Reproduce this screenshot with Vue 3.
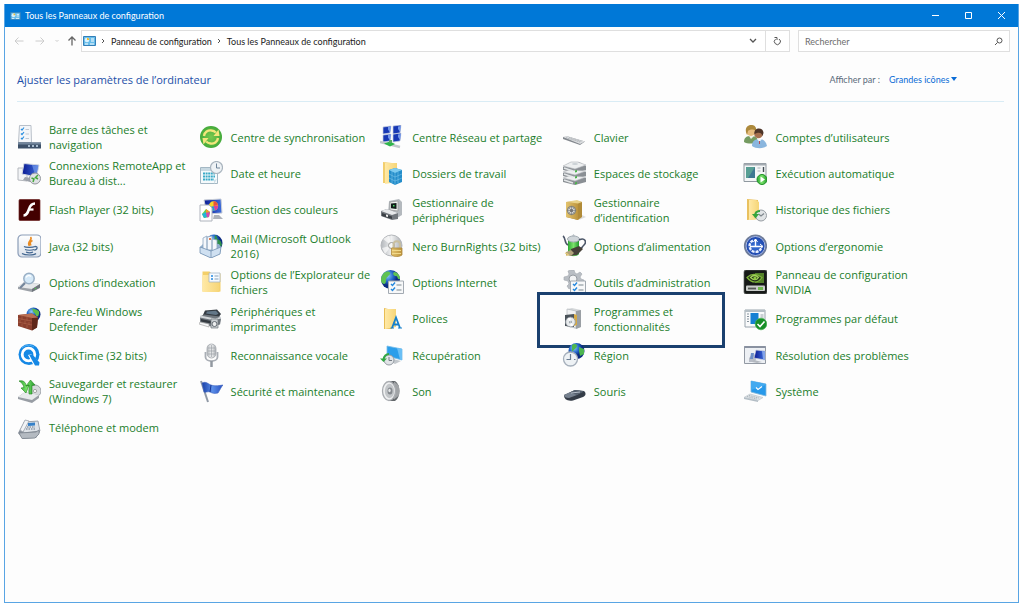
<script setup>
import { ref } from 'vue'

const query = ref('')
const view = ref('Grandes icônes')
const views = ['Catégorie', 'Grandes icônes', 'Petites icônes']

const glyphs = {
  taskbar:
    '<path d="M2.500 .5h11.500l.5 17h-13z" fill="#f4f6f9" stroke="#b9c0c9"/><path d="M4 4l1 1 2-2.500M4 8.500l1 1 2-2.500M4 13l1 1 2-2.500" fill="none" stroke="#2b8fe0" stroke-width="1.200"/><path d="M8.500 4.500h3.500M8.500 9h3.500M8.500 13.500h3.500" stroke="#c0c8d2"/><path d="M1 17.500h23v6H1z" fill="#3d5068"/><path d="M1 17.500h23v2H1z" fill="#71849b"/><path d="M11 20h2v2h-2zM15 20h2v2h-2zM19 20h2v2h-2z" fill="#a9bccf"/>',
  remote:
    '<path d="M1 7h9v13l-9-1z" fill="#f3f4f6" stroke="#b4b7bd"/><path d="M7 2.500L22 4l-2.500 12L5 13z" fill="url(#navy)" stroke="#d3d8e2" stroke-width="1"/><path d="M15 4l6.500.8-2.200 10-1-.3z" fill="#7fa4ee" opacity=".6"/><path d="M8 16l6 1-1 4-7-2z" fill="#9da2ab"/><circle cx="18" cy="17.500" r="5.500" fill="#dfe1e4" stroke="#94989e"/><path d="M14.500 17l2.500 1-1 3M21 14l-2.500 2.500 2.500 1.500" fill="none" stroke="#48a83e" stroke-width="1.500"/>',
  flash:
    '<rect x="2" y="1.500" width="21" height="21" rx="1" fill="#430000" stroke="#6e2422" stroke-width=".7"/><path d="M18 5.500c-4 0-5 2.500-6 5.500-1.300 4-2.300 6.500-5.500 6.500" fill="none" stroke="#fff" stroke-width="2.500"/><path d="M11.500 11.500h5" stroke="#fff" stroke-width="2.200"/>',
  java:
    '<rect x="1" y="1" width="23" height="22" rx="4" fill="url(#paper)" stroke="#8b9db8" stroke-width="1.200"/><path d="M13.500 3c3 3-4.500 4-1 9M15.500 6.500c-3 1.500-2.500 3-1.500 5" fill="none" stroke="#e98b22" stroke-width="1.600"/><path d="M7 12.500c2 1.500 9 1 11 0M8 15.500c2 1 7 1 9 0M9 18c2 1 5 1 7 0M5 19.500c3 2 12 2 14 0M17.500 12.500c4-.5 3 3.500-.5 3.500" fill="none" stroke="#41658f" stroke-width="1.200"/>',
  indexing:
    '<path d="M1 17l6-5 16 2v4l-8 4-14-3z" fill="#9ca1a7"/><path d="M1 17l6-5 16 2-8 5z" fill="#e6e8ea"/><path d="M15 19l8-5v3.500L15 22z" fill="#70767d"/><circle cx="12" cy="8.500" r="5.200" fill="#d5e9f8" stroke="#99afc5" stroke-width="1.500"/><path d="M9 7.500c1-2 3.500-2.500 5-1" fill="none" stroke="#fff" stroke-width="1.300"/><path d="M8 13l-5 5" stroke="#73849a" stroke-width="2.200"/><circle cx="18.500" cy="18.500" r=".8" fill="#53c553"/>',
  firewall:
    '<circle cx="16.500" cy="7.500" r="7" fill="url(#globe)"/><path d="M14 1.500c3 1 1 3 3 4s1 4 4 4c1-2 2-5 0-6s-4-2-7-2z" fill="#60be49"/><path d="M1 8l14-1.500 6 4-1 10-5 3L1 19z" fill="#8a3f2e"/><path d="M15 11l6-.5-1 10-5 3z" fill="#602719"/><path d="M1 8l14-1.500 6 4-6 .5z" fill="#b96f54"/><path d="M1 11.500l14 2.500M1 15l14 3M5 9v4M10 10v4M3 13v3M8 13.500v3.500M12 15v3M5 17v3M10 18v3" stroke="#b0644c" stroke-width=".6"/>',
  quicktime:
    '<circle cx="12" cy="11.500" r="10.500" fill="#1588e5"/><circle cx="11.500" cy="11.500" r="6.300" fill="none" stroke="#fff" stroke-width="2.800"/><path d="M11 12l3-1 8 8v4h-5z" fill="#fff"/><path d="M12 11.500h3.500l7 8-.5 3h-4z" fill="#1588e5"/><path d="M5 5c4-4 9-3 12-1" fill="none" stroke="#55b3f4"/>',
  backup:
    '<circle cx="18" cy="12" r="6" fill="#d6d9dc" stroke="#9ba0a6"/><circle cx="18" cy="12" r="1.600" fill="#fff" stroke="#888" stroke-width=".7"/><path d="M1 18l7-5 14 3v3l-7 5-14-4z" fill="#989da4"/><path d="M1 18l7-5 14 3-7 5z" fill="#e8eaec"/><path d="M2 2c4-1 7 1 7 5l3-1-3 8-5-5 3-.5C6 5 5 4 2 2zM12 15V6l-3 1 4.500-6L18 6l-3 .5V15z" fill="url(#green)" stroke="#23831f" stroke-width=".6"/>',
  phone:
    '<path d="M1 17L7 6l14-1 2 11-4 6-13 1z" fill="#89919b"/><path d="M7 6l14-1 2 10-17 2z" fill="#dfe3e8" stroke="#858d97" stroke-width=".7"/><path d="M3 14L8 4l4 1-6 11z" fill="#f2f4f6" stroke="#9ba1a9" stroke-width=".8"/><path d="M11 7l7-.5v3l-7 .5z" fill="#3681c8"/><path d="M10 11h8M9 13h10" stroke="#667789" stroke-dasharray="1.500 1"/><path d="M2 17l17-1 3-2v4l-4 4-13 .5z" fill="#b4bac1" stroke="#777f89" stroke-width=".7"/>',
  sync:
    '<circle cx="12" cy="12" r="11" fill="url(#sync)"/><path d="M5 11c.5-4 4-6 7.500-5.500 2 .2 3.300 1 4.300 2" fill="none" stroke="#f3e67c" stroke-width="2.400"/><path d="M14.500 11H20.500l-1-6.500z" fill="#f3e67c"/><path d="M19 13c-.5 4-4 6-7.500 5.500-2-.2-3.300-1-4.300-2" fill="none" stroke="#f3e67c" stroke-width="2.400"/><path d="M9.500 13H3.500l1 6.500z" fill="#f3e67c"/>',
  date:
    '<path d="M1.500 6.500h17v16h-17z" fill="#f5fafc" stroke="#a4b8c4"/><path d="M2 7h16v3H2z" fill="#c8d9e2"/><path d="M4 12.500h12M4 15.500h12M4 18.500h11" stroke="#3aaac7" stroke-width="2" stroke-dasharray="2 .6"/><path d="M15 23v-4l3-1z" fill="#cfe0e8"/><circle cx="17.500" cy="6.500" r="6" fill="#eef2f5" stroke="#a9b4be" stroke-width="1.200"/><path d="M17.500 2.500v4.500H21" fill="none" stroke="#6f8499"/>',
  color:
    '<path d="M5 2l17-1 1 14-15 1z" fill="url(#navy)" stroke="#c9ced6"/><circle cx="14.500" cy="8" r="4.700" fill="#f4d72d"/><path d="M14.500 8V3.300a4.700 4.700 0 014.500 4z" fill="#ea523d"/><path d="M14.500 8l4.500-.5a4.700 4.700 0 01-3 5z" fill="#db3ea0"/><path d="M14.500 8l1.500 4.500a4.700 4.700 0 01-6-3z" fill="#2498db"/><path d="M15 17h5l4 4H14z" fill="#aeb3ba"/><path d="M1 7h9l3 3v13H1z" fill="#fff" stroke="#aeb3bc"/><path d="M7 11l4 3-1 5-5 1-2-4z" fill="#67d34b"/><path d="M3 16l4-2 1 5-3 1z" fill="#22b6d8"/><path d="M7 11l4 3-4 1z" fill="#f49a2c"/><path d="M7 15l4-1-1 5-2 .5z" fill="#d849b1"/>',
  mail:
    '<circle cx="15" cy="9" r="8.500" fill="url(#globe)"/><path d="M16 1c3 1 1 4 4 5s2 4 3 4c-1 4-4 7-6 7l-2-8z" fill="#2f8f4c"/><path d="M1 13l4-4 15 1 2 3-1 7-9 4-11-5z" fill="#92b0ce"/><path d="M4 4l4-2v14l-4-1zM8 3l5-1v14H8zM13 5l5 1v11h-5z" fill="#f4f7fb" stroke="#8ea6c0" stroke-width=".8"/><path d="M10 4h2v2h-2z" fill="#e17b50"/><path d="M1 13l11 4 10-4-1 7-9 4-11-5z" fill="#cfe0f1" stroke="#7392b2" stroke-width=".8"/><path d="M12 17v7" stroke="#7392b2" stroke-width=".8"/>',
  explorer:
    '<path d="M3.500 1.500h7l2 2h9v18h-18z" fill="#f3cf68"/><path d="M3.500 5h17v17h-17z" fill="url(#folder)"/><path d="M10 3h11v9H10z" fill="#f5faff" stroke="#a7b6c5" stroke-width=".8"/><path d="M12 6h2M12 9h2" stroke="#2689df" stroke-width="1.600"/><path d="M15.500 6h4M15.500 9h4" stroke="#8aa1b6"/>',
  printer:
    '<path d="M6 3.500l12-1 4 4.500-3 4-15-3z" fill="#343b42"/><path d="M8 4.500l9-.7 2.500 3L17 8 7 6.500z" fill="#637788"/><path d="M1 9.500l4-2 16 2 1 3-1 5-9 2-11-4z" fill="#70777e"/><path d="M1 9.500l15 3 6-2" fill="none" stroke="#d2d6d9" stroke-width="1.800"/><path d="M2 12l10 2v2.500L2 14.500z" fill="#343a40"/><path d="M1 15l9 2v3l-10-3z" fill="#f7f8f9" stroke="#999" stroke-width=".6"/><path d="M12 12h7v9h-7z" fill="#c9ced2" stroke="#6f767d" stroke-width=".7"/><circle cx="15.500" cy="17" r="2.500" fill="#eceeef" stroke="#646b72"/>',
  mic:
    '<rect x="8" y="1" width="9" height="14" rx="4.500" fill="url(#metal)" stroke="#a2a7ad" stroke-width=".8"/><path d="M9 5h7M9 8h7M9 11h7M12.500 2v12" stroke="#9ca2a8" stroke-width=".7"/><path d="M6.500 9v5c0 5.500 12 5.500 12 0V9" fill="none" stroke="#a9aeb5" stroke-width="1.800"/><path d="M12.500 18v6" stroke="#9298a0" stroke-width="2.500"/>',
  flag:
    '<path d="M2 2l7 21" stroke="#8f98a5" stroke-width="2"/><path d="M3 4c4-2 6 1 9 2s6 1 12 0c-2 2-3 5-5 8-4 1-6 0-8-1s-5 1-6 0z" fill="url(#flagblue)" stroke="#3c62bd" stroke-width=".6"/><path d="M12 6l-1 7" stroke="#183796"/>',
  network:
    '<path d="M3 2l8-1-1 7-7 1zM13 1l8-1-1 8-7 1zM3 10l8-1-1 7-7 1zM13 9l8-1-1 8-7 1z" fill="#1838b4" stroke="#c6cfe0" stroke-width=".7"/><path d="M8 2l3-.5-1 6-2-3zM18 1.500l3-.5-1 6-2-3zM8 10l3-.5-1 6-2-3zM18 9.500l3-.5-1 6-2-3z" fill="#7398ea"/><path d="M0 17l20 5" stroke="#c3c8cc" stroke-width="2.500"/><path d="M4 18.500l6-2 5 2.500-5 2.500z" fill="#2eb64a"/><path d="M9 15h3v3H9z" fill="#5aa56a"/>',
  work:
    '<path d="M3 1l9 1v20H3z" fill="#f2ce6d"/><path d="M5 2h12v19l-12 2z" fill="url(#folder)"/><path d="M9 9l6-2 7 2v12l-7 3-6-3z" fill="#248dca"/><path d="M9 9l6-2 7 2-7 3z" fill="#7dcbf0"/><path d="M15 12v12M9 13l6 3 7-3M9 17l6 3 7-3M12 10v12M18 11v11" stroke="#79c4ea" stroke-width=".6" fill="none"/>',
  device:
    '<path d="M9 3l10-2 3 3v13l-5 3-9-4z" fill="#b4b9be"/><path d="M10 4l8-1v10l-8-1z" fill="#efefef" stroke="#999" stroke-width=".8"/><path d="M11 5.500l5.500-.6V11l-5.500-.7z" fill="#111d19"/><path d="M13 7h1.500v1.500H13z" fill="#47df68"/><path d="M1 13l6-2 11 4v6l-6 1-11-4z" fill="#72777d"/><path d="M1 13l6-2 11 4-6 2z" fill="#e7e9eb"/><path d="M2 15l10 3.500V21L2 18z" fill="#3b4046"/><path d="M6 16.500l2 .6v2L6 18.500z" fill="#eee"/>',
  burn:
    '<circle cx="11.500" cy="11.500" r="10.500" fill="url(#metal)" stroke="#b3b6ba"/><path d="M11.500 11.500L3 5l6-3.500zM11.500 11.500L5 20l-3-6z" fill="#fff" opacity=".65"/><circle cx="11.500" cy="11.500" r="3" fill="#f7f8f8" stroke="#999"/><path d="M13.500 14v-3c0-5 6.500-5 6.500 0v3" fill="none" stroke="#c9bf9f" stroke-width="2"/><path d="M11.500 14h10.500v7c-3 2-7.500 2-10.500 0z" fill="url(#gold)" stroke="#b08b3f" stroke-width=".8"/><path d="M12 16.500h9M12 19.500h9" stroke="#f1d98a"/>',
  internet:
    '<circle cx="10.500" cy="9.500" r="9.500" fill="url(#globe)"/><path d="M4 3c4-3 7-1 6 1S6 7 6 10s-1 4-2 4C0 13 0 7 4 3zM14 2c4 0 6 4 6 7-3 1-2-3-4-3s-4-2-2-4z" fill="#5fc253"/><path d="M8.500 11h15v12.500h-15z" fill="#f7f8f9" stroke="#a3aab2"/><path d="M11 14l1.500 1.500L15 12.500M11 19l1.500 1.500 2.500-3" fill="none" stroke="#2588de" stroke-width="1.400"/><path d="M16.500 15h5M16.500 20h5" stroke="#7d8790" stroke-width="1.200"/>',
  fonts:
    '<path d="M4 1l8 2v19H4z" fill="#e8bd55"/><path d="M5 2h11v18l-11 2z" fill="url(#folder)"/><path d="M12 21l4-10.500L20 21M13.500 17.500h5" fill="none" stroke="#1680cb" stroke-width="1.800"/><path d="M10.500 21h3.500M18 21h4" stroke="#1680cb"/>',
  recovery:
    '<path d="M7 3l15 3v11L7 13z" fill="#2c9eea" stroke="#77bce9" stroke-width=".8"/><path d="M17 5l5 1v11l-2-.5z" fill="#6abff5"/><path d="M13 16l8 2-6 3-6-3z" fill="#c3c8cd"/><circle cx="9" cy="17" r="5" fill="#e1e4e7" stroke="#939aa1"/><path d="M9 14v3.500h3" fill="none" stroke="#737b83"/><path d="M3.500 17c0-4 3-6 5.500-6" fill="none" stroke="#32a743" stroke-width="2"/><path d="M0 15.500h7L3.500 19z" fill="#32a743"/>',
  sound:
    '<path d="M9 2h6c6 4 6 16 0 20H9z" fill="#63676b"/><path d="M14 2.500l5 4v10l-5 4z" fill="#a0a3a6"/><ellipse cx="9" cy="12" rx="6.500" ry="9.500" fill="#eff0f1" stroke="#a9acb0" stroke-width="1.300"/><ellipse cx="9.500" cy="12" rx="4.700" ry="7.200" fill="#c3c6c9"/><ellipse cx="10" cy="12" rx="2.500" ry="3.500" fill="#85898e"/><ellipse cx="9.500" cy="11.500" rx="1.200" ry="1.800" fill="#e6e8e9"/>',
  keyboard:
    '<path d="M1 12l5-.5 17 5-5 3.500L1 14z" fill="#83888e"/><path d="M1 12l5-.5 17 5-5 2.500z" fill="#dcdee0"/><path d="M4 12.700l14 4.300M7 12.500l13 4" stroke="#a4aaaf" stroke-width=".8" stroke-dasharray="1.500 .7"/>',
  storage:
    '<path d="M1 18l6-3 17 2v4l-11 3L1 21zM1 12l6-3 17 2v4l-11 3.500L1 15zM1 6l6-4 10-1 7 4v4L13 12 1 9z" fill="#8a8f94"/><path d="M1 17l6-2 17 1-11 4zM1 11l6-2 17 1-11 4zM1 5l8-4h7l8 3-11 4z" fill="#edeff0" stroke="#b0b4b8" stroke-width=".6"/><path d="M2 7l9 3M2 13l9 3M2 19l9 3" stroke="#e3e6e8" stroke-width="1.600"/><path d="M13 9.500l2-.6v2l-2 .6zM13 15.500l2-.6v2l-2 .6zM13 21.500l2-.6v2l-2 .6z" fill="#4ab34a"/><ellipse cx="13" cy="3" rx="3" ry="1" fill="#cbd0d4"/>',
  vault:
    '<path d="M20 17l4 2-7 3z" fill="#ddd"/><path d="M4 4l12-1 4 1v15l-4 3-12-3z" fill="#b18b38"/><path d="M4 4l12 1v17l-12-3z" fill="url(#gold)"/><path d="M4 4l11-2 5 2-4 1.500z" fill="#e9d28a"/><circle cx="9.500" cy="12.500" r="4.700" fill="#8c8a7c"/><circle cx="9.500" cy="12.500" r="3.300" fill="#d3d5d5"/><circle cx="9.500" cy="12.500" r="1.500" fill="#666"/><path d="M9.500 8v9M5 12.500h9M6.500 9.500l6 6M12.500 9.500l-6 6" stroke="#777" stroke-width=".6"/>',
  power:
    '<path d="M6 5h11v15c-2 3-9 3-11 0z" fill="url(#green)"/><ellipse cx="11.500" cy="5" rx="6" ry="3" fill="#d0d6da" stroke="#a4adb3"/><path d="M9 3l2.500-3L14 3z" fill="#b6bec4"/><path d="M6 11C2 9 4 4 1 2M17 6c6-3 8 2 5 5s-2 4-5 4" fill="none" stroke="#4c5668" stroke-width="1.600"/><path d="M9 15l8-3 4 3-6 6-7 1z" fill="#454038"/><path d="M4 18l5-2 3 3-3 3-5-1z" fill="#b2a37b"/><path d="M3 19l3 1M4 21.500l3-1" stroke="#e4c979" stroke-width="1.300"/>',
  admin:
    '<path d="M9 0h3l1 3 2 1 3-2 2 2-2 3 1 2 3 1v3h-4l-1 3-3 4-2-2-2-1-3 2-2-3 2-2-1-3-4-1V7l4-1 1-2-1-3 3-1z" fill="#b9bec4" stroke="#a2a8ae" stroke-width=".6"/><circle cx="11" cy="9" r="4" fill="#f2f3f4" stroke="#959ba1"/><path d="M8.500 11h15v12.500h-15z" fill="#f7f8f9" stroke="#a3aab2"/><path d="M11 14l1.500 1.500L15 12.500M11 19l1.500 1.500 2.500-3" fill="none" stroke="#2588de" stroke-width="1.400"/><path d="M16.500 15h5M16.500 20h5" stroke="#7d8790" stroke-width="1.200"/>',
  programs:
    '<path d="M5 2l5-1 9 2v17l-5 2-9-3z" fill="#d5d8da"/><path d="M5 2l9 2v17l-9-2z" fill="#f1f2f3" stroke="#b3b7bb" stroke-width=".7"/><path d="M14 4l5-1v17l-5 2z" fill="#9a9fa4"/><path d="M12 7l3 1v10l-3 1z" fill="#d6aa44"/><path d="M3 8l9-1v13l-9-1z" fill="#4a5259"/><circle cx="8.500" cy="15" r="4.800" fill="#e8ebed" stroke="#959ba1" stroke-width=".9"/><circle cx="8.500" cy="15" r="1.600" fill="#9da5ac"/><path d="M8.500 15l-3-3.500 3-1zM8.500 15l3 3.500-3 1z" fill="#fff"/>',
  region:
    '<circle cx="14.500" cy="8" r="8" fill="url(#globe)"/><path d="M10 2c5-3 6 1 4 3s-4 3-4 4zM17 4l5 2v5l-4 2-1-5z" fill="#4db64e"/><circle cx="8.500" cy="16" r="7" fill="#eef2f5" stroke="#a5afbb" stroke-width="1.300"/><path d="M8.500 11v5.500H4.500M12 16.500h1.500" fill="none" stroke="#6a7d92" stroke-width="1.200"/>',
  mouse:
    '<path d="M2 16l11-5 9 1c3 3 1 5-1 6l-10 3.500c-6 1-9-1.500-9-5.500z" fill="#343c47"/><path d="M2 16l11-5 8 1-6 4-8 3c-3 0-5-1-5-3z" fill="#76818f"/><path d="M13 11l9 1.500-7 3.500-7-2.500z" fill="#55606e"/><path d="M9 14l9-1" stroke="#b5bec9" stroke-width="1"/>',
  users:
    '<circle cx="8" cy="6" r="5" fill="#e6bd80"/><path d="M3 7C1-2 15-2 13 6c-2-2-6-2-8 0l-1 4z" fill="#ad8a3d"/><path d="M1 17c0-5 3-6 7-6s7 1 7 6c-3 2-11 2-14 0z" fill="#759b61"/><path d="M6 11l2 3 3-3z" fill="#edf2e8"/><circle cx="15.500" cy="9" r="4.300" fill="#a5704f"/><path d="M11.500 9c-1-7 9-7 9-1l-1 3c-1-4-4-4-8-2z" fill="#4d3427"/><path d="M9 21c0-5 3-7 7-7s7 2 8 7c-4 3-11 3-15 0z" fill="#8ab6de"/><path d="M14 14l2.500 3 2.500-3z" fill="#f4f6f8"/><path d="M16.500 16v3" stroke="#bd4d51"/>',
  autoplay:
    '<path d="M1 2.500h22v18H1z" fill="#f4f6f7" stroke="#8f989f"/><path d="M1 2.500h22v2H1z" fill="#a3abb1"/><path d="M3 6h9v11H3z" fill="#3e7892"/><path d="M3 6h9l-7 11H3z" fill="#589f94"/><path d="M14.500 7h3M14.500 10h3" stroke="#a9b1b8"/><path d="M20.500 6v5" stroke="#414b54" stroke-width="1.400"/><circle cx="19" cy="18.500" r="5" fill="url(#green)" stroke="#1c9023"/><path d="M17.500 15.500l4.500 3-4.500 3z" fill="#fff"/>',
  history:
    '<path d="M4 1l11 1v19l-11 1z" fill="#e9c15f"/><path d="M6 2h7l3 2v17l-10 1z" fill="url(#folder)"/><circle cx="18" cy="17.500" r="5.500" fill="#e1e4e6" stroke="#979da3"/><path d="M15.500 16l2.500 2 3-2.500" fill="none" stroke="#7f868d" stroke-width="1.200"/><path d="M12 18c0-3 2-5 5-5" fill="none" stroke="#36a43b" stroke-width="2"/><path d="M9 16h7l-3.500 4.500z" fill="#36a43b"/>',
  ease:
    '<circle cx="12.500" cy="12" r="10.800" fill="url(#easeblue)" stroke="#707d99" stroke-width="1.600"/><circle cx="12.500" cy="12" r="9.500" fill="none" stroke="#d4ddf1" stroke-width=".8"/><path d="M10 6.500a6 6 0 108 8" fill="none" stroke="#e8efff" stroke-width="2.400" stroke-dasharray="3 1"/><path d="M12.500 5v7.500H7M12.500 12.500h7" fill="none" stroke="#fff" stroke-width="1.400"/><path d="M10.500 8l2-3 2 3M17 10l3 2.500-3 2.500" fill="none" stroke="#fff"/>',
  nvidia:
    '<rect x="1" y="0" width="23" height="24" rx="2" fill="#171a18" stroke="#5d615e" stroke-width=".7"/><path d="M12 3h9v10h-9z" fill="#55822a"/><path d="M4 7.500c5-5 11-3 15 0-4 6-10 6-15 0z" fill="#23301a" stroke="#7fb53a" stroke-width="1.200"/><path d="M7.500 7.500c3-3 6-2 8 0-2 3-5 3-8 0z" fill="none" stroke="#a5d35c" stroke-width="1.200"/><circle cx="12" cy="8" r="1.600" fill="#8bc63d"/><rect x="3" y="15.500" width="19" height="5.500" rx="1" fill="#c9ccc9"/><path d="M5 18.500h8" stroke="#565a56" stroke-width="1.800"/><path d="M15 17h5v3h-5z" fill="#6fb84e"/>',
  defaults:
    '<path d="M2 3h20v17H2z" fill="#f9fafb" stroke="#99a4ad"/><path d="M2 3h20v2H2z" fill="#b5bfc6"/><path d="M4 7h2M4 9.500h2M4 12h2M4 14.500h2" stroke="#87939d"/><path d="M7.500 6h8v11h-8z" fill="#1680d3"/><path d="M17.500 8h3M17.500 10h3" stroke="#9ba5ad"/><circle cx="18" cy="17" r="5.800" fill="#188f28" stroke="#48b153" stroke-width=".7"/><path d="M14.500 17l2.500 2.500 4.500-5" fill="none" stroke="#fff" stroke-width="1.600"/>',
  trouble:
    '<path d="M1.500 3.500h21v17h-21z" fill="#edf0f4" stroke="#9299a3"/><path d="M1.500 3h21v2h-21z" fill="#8991a0"/><path d="M6 15l4-4 4 2-2 6H6z" fill="#b8bdc7"/><path d="M13 7l9 1v9l-11-2z" fill="url(#navy)" stroke="#cdd3df" stroke-width=".7"/><path d="M19 8l3 .5V17l-2-1z" fill="#82a3e9"/><path d="M8 10h3l-1 6H7z" fill="#6d8fc7"/><path d="M11 17l8 2-5 1-5-1z" fill="#b3b8bf"/>',
  system:
    '<path d="M8 2l15 3v12L8 13z" fill="#2799ea" stroke="#83b9dc" stroke-width=".8"/><path d="M8 2l15 3v1L8 11z" fill="#43aaf0"/><path d="M13 8.500l2 2 4-3" fill="none" stroke="#fff" stroke-width="1.200"/><path d="M7 15l13 3.500-5 3-14-3z" fill="#dde2e6" stroke="#bcc4ca" stroke-width=".7"/><path d="M1 18.500l14 3v1.500L1 20z" fill="#b3bdc5"/><path d="M6 16.500l10 2.500M4 17.500l10 2.500" stroke="#a9b2b8" stroke-dasharray="1 .8"/>'
}

const columns = [
  [
    ['taskbar', 'Barre des tâches et\nnavigation'],
    ['remote', 'Connexions RemoteApp et\nBureau à dist...'],
    ['flash', 'Flash Player (32 bits)'],
    ['java', 'Java (32 bits)'],
    ['indexing', 'Options d’indexation'],
    ['firewall', 'Pare-feu Windows\nDefender'],
    ['quicktime', 'QuickTime (32 bits)'],
    ['backup', 'Sauvegarder et restaurer\n(Windows 7)'],
    ['phone', 'Téléphone et modem']
  ],
  [
    ['sync', 'Centre de synchronisation'],
    ['date', 'Date et heure'],
    ['color', 'Gestion des couleurs'],
    ['mail', 'Mail (Microsoft Outlook\n2016)'],
    ['explorer', 'Options de l’Explorateur de\nfichiers'],
    ['printer', 'Périphériques et\nimprimantes'],
    ['mic', 'Reconnaissance vocale'],
    ['flag', 'Sécurité et maintenance']
  ],
  [
    ['network', 'Centre Réseau et partage'],
    ['work', 'Dossiers de travail'],
    ['device', 'Gestionnaire de\npériphériques'],
    ['burn', 'Nero BurnRights (32 bits)'],
    ['internet', 'Options Internet'],
    ['fonts', 'Polices'],
    ['recovery', 'Récupération'],
    ['sound', 'Son']
  ],
  [
    ['keyboard', 'Clavier'],
    ['storage', 'Espaces de stockage'],
    ['vault', 'Gestionnaire\nd’identification'],
    ['power', 'Options d’alimentation'],
    ['admin', 'Outils d’administration'],
    ['programs', 'Programmes et\nfonctionnalités'],
    ['region', 'Région'],
    ['mouse', 'Souris']
  ],
  [
    ['users', 'Comptes d’utilisateurs'],
    ['autoplay', 'Exécution automatique'],
    ['history', 'Historique des fichiers'],
    ['ease', 'Options d’ergonomie'],
    ['nvidia', 'Panneau de configuration\nNVIDIA'],
    ['defaults', 'Programmes par défaut'],
    ['trouble', 'Résolution des problèmes'],
    ['system', 'Système']
  ]
]

const panel =
  '<path d="M.5.500h12v9H.5z" fill="#68bdea" stroke="#337fb8"/><circle cx="4" cy="4" r="2.300" fill="#d9f2ff"/><path d="M4 4V1.700A2.300 2.300 0 016.300 4z" fill="#f3bd32"/><path d="M8 3h3M8 5h3M2 8h3M7 8h4" stroke="#fff"/>'
</script>

<template>
  <div class="window">
    <svg class="defs" aria-hidden="true">
      <defs>
        <linearGradient id="navy"><stop offset="0" stop-color="#0a1a92" /><stop offset="1" stop-color="#3f6fdd" /></linearGradient>
        <linearGradient id="paper" x2="0" y2="1"><stop offset="0" stop-color="#fff" /><stop offset="1" stop-color="#dce3ec" /></linearGradient>
        <linearGradient id="folder"><stop offset="0" stop-color="#ffe9a6" /><stop offset="1" stop-color="#f6d577" /></linearGradient>
        <linearGradient id="green"><stop offset="0" stop-color="#2da934" /><stop offset=".5" stop-color="#7be36b" /><stop offset="1" stop-color="#22992d" /></linearGradient>
        <linearGradient id="gold"><stop offset="0" stop-color="#e4c46e" /><stop offset="1" stop-color="#bd943d" /></linearGradient>
        <linearGradient id="metal"><stop offset="0" stop-color="#b4b8bc" /><stop offset=".5" stop-color="#f0f1f2" /><stop offset="1" stop-color="#a9adb2" /></linearGradient>
        <linearGradient id="flagblue"><stop offset="0" stop-color="#183fa7" /><stop offset=".5" stop-color="#5b8ee8" /><stop offset="1" stop-color="#274fc0" /></linearGradient>
        <radialGradient id="globe" cx=".35" cy=".3"><stop offset="0" stop-color="#90cdf6" /><stop offset=".6" stop-color="#2468ca" /><stop offset="1" stop-color="#0b2b80" /></radialGradient>
        <radialGradient id="sync"><stop offset="0" stop-color="#79c94f" /><stop offset="1" stop-color="#43aa3a" /></radialGradient>
        <radialGradient id="easeblue"><stop offset="0" stop-color="#3974da" /><stop offset="1" stop-color="#1a3fa5" /></radialGradient>
      </defs>
    </svg>

    <header class="titlebar">
      <svg class="panel-icon small" viewBox="0 0 13 10" aria-hidden="true" v-html="panel"></svg>
      <span class="title">Tous les Panneaux de configuration</span>
      <button type="button" aria-label="Réduire">
        <svg width="9" height="9" viewBox="0 0 9 9"><path d="M1 4.500h7" /></svg>
      </button>
      <button type="button" aria-label="Agrandir">
        <svg width="9" height="9" viewBox="0 0 9 9"><path d="M1.500 1.500h6v6h-6z" /></svg>
      </button>
      <button type="button" aria-label="Fermer">
        <svg width="9" height="9" viewBox="0 0 9 9"><path d="M1 1l7 7M8 1l-7 7" /></svg>
      </button>
    </header>

    <nav class="toolbar" aria-label="Navigation">
      <div class="history">
        <button type="button" class="dim" aria-label="Précédent">
          <svg width="10" height="10" viewBox="0 0 10 10"><path d="M9.500 5H1M4.500 1.500L1 5l3.500 3.500" /></svg>
        </button>
        <button type="button" class="dim" aria-label="Suivant">
          <svg width="10" height="10" viewBox="0 0 10 10"><path d="M.5 5H9M5.500 1.500L9 5 5.500 8.500" /></svg>
        </button>
        <button type="button" class="dim narrow" aria-label="Emplacements récents">
          <svg width="4" height="4" viewBox="0 0 4 4"><path d="M.5 1L2 2.500 3.500 1" /></svg>
        </button>
        <button type="button" class="up" aria-label="Dossier parent">
          <svg width="10" height="10" viewBox="0 0 10 10"><path d="M5 9.500V1M1.500 4.500L5 1l3.500 3.500" /></svg>
        </button>
      </div>
      <div class="address">
        <svg class="panel-icon" viewBox="0 0 13 10" aria-hidden="true" v-html="panel"></svg>
        <svg class="chevron" viewBox="0 0 4 6" aria-hidden="true"><path d="M1 1l2 2-2 2" /></svg>
        <a href="#panneau">Panneau de configuration</a>
        <svg class="chevron" viewBox="0 0 4 6" aria-hidden="true"><path d="M1 1l2 2-2 2" /></svg>
        <a href="#tous">Tous les Panneaux de configuration</a>
        <span class="spacer"></span>
        <button type="button" class="drop" aria-label="Adresses précédentes">
          <svg width="8" height="6" viewBox="0 0 8 6"><path d="M1 1l3 3 3-3" /></svg>
        </button>
        <button type="button" class="refresh" aria-label="Actualiser">
          <svg width="9" height="10" viewBox="0 0 9 10"><path d="M6 3A3 3 0 112.500 3.200M1.500 1.500h2.500V4" /></svg>
        </button>
      </div>
      <div class="search">
        <input v-model="query" type="text" placeholder="Rechercher" aria-label="Rechercher" />
        <button type="button" aria-label="Lancer la recherche">
          <svg width="9" height="9" viewBox="0 0 9 9"><circle cx="5.500" cy="3.500" r="2.500" /><path d="M3.500 5.500L1 8" /></svg>
        </button>
      </div>
    </nav>

    <main>
      <div class="heading">
        <h1>Ajuster les paramètres de l’ordinateur</h1>
        <label for="view">Afficher par :</label>
        <div class="select">
          <select id="view" v-model="view">
            <option v-for="name in views" :key="name">{{ name }}</option>
          </select>
          <svg width="6" height="4" viewBox="0 0 6 4" aria-hidden="true"><path d="M0 0h6L3 4z" /></svg>
        </div>
      </div>

      <div class="items">
        <ul v-for="(column, c) in columns" :key="c">
          <li v-for="[id, name] in column" :key="id" :class="{ marked: id === 'programs' }">
            <a :href="'#' + id">
              <svg class="icon" viewBox="0 0 24 24" aria-hidden="true" v-html="glyphs[id]"></svg>
              <span>{{ name }}</span>
            </a>
          </li>
        </ul>
      </div>
    </main>
  </div>
</template>

<style>
body {
  margin: 0;
  background: #fff;
}
</style>

<style scoped>
.window {
  box-sizing: border-box;
  display: flex;
  flex-direction: column;
  min-height: calc(100vh - 10px);
  margin: 4px 5px 6px 4px;
  border: 1px solid #59a5e4;
  border-top: 0;
  background: #fdfdfd;
  font-family: Lato, 'Open Sans', sans-serif;
  font-size: 9px;
  color: #222;
}
.defs {
  position: absolute;
  width: 0;
  height: 0;
}
button {
  display: flex;
  align-items: center;
  justify-content: center;
  padding: 0;
  border: 0;
  background: none;
  color: inherit;
}
button path,
button circle,
.chevron path {
  fill: none;
  stroke: currentColor;
}
a {
  color: inherit;
  text-decoration: none;
}
.titlebar {
  display: flex;
  align-items: center;
  height: 23px;
  padding-left: 5px;
  background: #0078d7;
  color: #fff;
}
.titlebar button {
  width: 33px;
  height: 23px;
}
.title {
  flex: 1;
  margin-left: 4px;
}
.panel-icon {
  flex: none;
  width: 13px;
  height: 10px;
}
.panel-icon.small {
  width: 11px;
  height: 8px;
}
.toolbar {
  display: flex;
  align-items: center;
  height: 22px;
  padding: 3px 8px 0 3px;
}
.history {
  display: flex;
  align-items: center;
  width: 73px;
  height: 22px;
  color: #666;
}
.history button {
  width: 21px;
}
.history .dim {
  color: #ccc;
}
.history .narrow {
  width: 13px;
}
.history .up {
  width: 17px;
}
.history .up path {
  stroke-width: 1.3;
}
.address,
.search {
  box-sizing: border-box;
  display: flex;
  align-items: center;
  height: 22px;
  border: 1px solid #dfdfdf;
  background: #fff;
}
.address {
  flex: 1;
  padding-left: 1px;
}
.chevron {
  width: 4px;
  height: 6px;
  margin: 0 6px 0 5px;
  color: #555;
}
.address a {
  white-space: nowrap;
}
.spacer {
  flex: 1;
}
.address button {
  width: 24px;
  height: 20px;
  color: #555;
}
.address .drop path {
  stroke-width: 1.3;
}
.address .refresh {
  border-left: 1px solid #dfdfdf;
}
.search {
  width: 212px;
  margin-left: 8px;
}
.search input {
  flex: 1;
  min-width: 0;
  padding: 0 0 0 6px;
  border: 0;
  outline: 0;
  background: none;
  font: inherit;
}
.search input::placeholder {
  color: #6d6d6d;
  opacity: 1;
}
.search button {
  width: 21px;
  height: 20px;
  color: #555;
}
main {
  padding: 0 14px 0 12px;
}
.heading {
  display: flex;
  align-items: center;
  height: 44px;
  padding: 5px 46px 0 0;
  border-bottom: 1px solid #d9ecf5;
}
h1 {
  flex: 1;
  margin: 0;
  font-family: 'Open Sans', 'Noto Sans', sans-serif;
  font-size: 11px;
  font-weight: 400;
  color: #1c4fa8;
}
label {
  margin-right: 9px;
  color: #5b6b7b;
}
.select {
  position: relative;
  width: 69px;
  color: #0a6cd6;
}
.select select {
  width: 100%;
  padding: 0;
  border: 0;
  appearance: none;
  background: none;
  color: inherit;
  font: inherit;
}
.select svg {
  position: absolute;
  top: 50%;
  right: 1px;
  margin-top: -2px;
  fill: currentColor;
  pointer-events: none;
}
.items {
  display: grid;
  grid-template-columns: repeat(5, 1fr);
  padding: 17px 79px 0 0;
}
ul {
  display: grid;
  grid-template-rows: repeat(9, 1fr);
  min-height: 327px;
  margin: 0;
  padding: 0;
  list-style: none;
}
li {
  position: relative;
  display: flex;
  align-items: center;
}
li a {
  display: flex;
  align-items: center;
  gap: 8px;
  font-family: 'Open Sans', 'Noto Sans', sans-serif;
  font-size: 11px;
  line-height: 15px;
  color: #1b7d2b;
  white-space: pre;
}
.icon {
  flex: none;
  width: 24px;
  height: 24px;
}
.marked::after {
  content: '';
  position: absolute;
  inset: -9px 18px -11px -25px;
  border: 3px solid #1a406f;
  pointer-events: none;
}
</style>
